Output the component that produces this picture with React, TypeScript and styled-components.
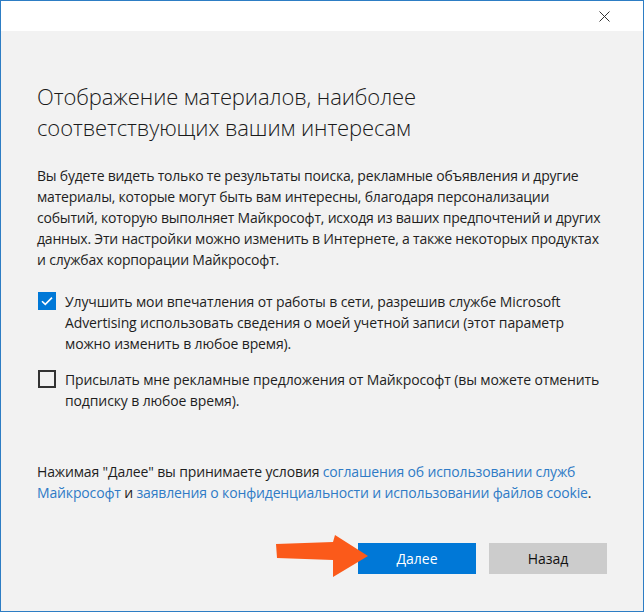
import React, { useState } from 'react';
import styled, { createGlobalStyle } from 'styled-components';

const GlobalStyle = createGlobalStyle`
  html, body { margin: 0; padding: 0; background: #f2f2f2; }
  * { box-sizing: border-box; }
`;

const Window = styled.div`
  position: relative;
  width: 644px; height: 612px;
  border: 1px solid #2d7dc4;
  background: #f2f2f2;
  display: flex; flex-direction: column;
  font-family: "Open Sans", "Noto Sans", sans-serif;
  color: #1e1e1e;
  overflow: hidden;
`;

const TitleBar = styled.div`
  height: 30px; background: #fff;
  display: flex; justify-content: flex-end; align-items: center;
`;

const CloseButton = styled.button`
  width: 46px; height: 30px; border: 0; background: transparent; padding: 0;
  display: flex; align-items: center; justify-content: center;
  margin-right: 16px;
`;

const Content = styled.div`
  flex: 1; display: flex; flex-direction: column;
  padding: 50px 36px 0 36px;
`;

const Heading = styled.h1`
  margin: 0; font-weight: 300; font-size: 22px; line-height: 31px; color: #1a1a1a;
  letter-spacing: -0.1px; white-space: nowrap;
`;

const Paragraph = styled.p<{ $gap: number; $spacing: number }>`
  margin: ${(p) => p.$gap}px 0 0 0;
  font-size: 14px; line-height: 21px; color: #1e1e1e;
  letter-spacing: ${(p) => p.$spacing}px; white-space: nowrap;
`;

const OptionRow = styled.label<{ $gap: number }>`
  margin-top: ${(p) => p.$gap}px;
  display: flex; align-items: flex-start; gap: 9px;
  font-size: 14px; line-height: 21px; cursor: pointer;
  letter-spacing: -0.12px; white-space: nowrap;
`;

const Box = styled.span<{ $checked: boolean }>`
  flex: none; width: 18px; height: 18px; margin-top: 1px; margin-left: 1px;
  display: flex; align-items: center; justify-content: center;
  background: ${(p) => (p.$checked ? '#0078d7' : 'transparent')};
  border: ${(p) => (p.$checked ? 'none' : '2px solid #333')};
`;

const Link = styled.a`
  color: #2f7bc6; text-decoration: none;
`;

const Buttons = styled.div`
  margin-top: 40px; display: flex; justify-content: flex-end; gap: 13px;
  position: relative;
`;

const Button = styled.button<{ $primary?: boolean }>`
  width: 118px; height: 31px; border: 0; padding: 0;
  font-family: inherit; font-size: 14px;
  background: ${(p) => (p.$primary ? '#0078d7' : '#cccccc')};
  color: ${(p) => (p.$primary ? '#fff' : '#111')};
`;

const Arrow = styled.svg`
  position: absolute; left: 239px; top: -8px; pointer-events: none;
`;

function Check({ checked, onToggle, children, gap }: { checked: boolean; onToggle: () => void; children: React.ReactNode; gap: number }) {
  return (
    <OptionRow $gap={gap} onClick={onToggle}>
      <Box $checked={checked}>
        {checked && (
          <svg width="12" height="10" viewBox="0 0 12 10">
            <path d="M1 5.2 L4.3 8.4 L11 1.6" fill="none" stroke="#fff" strokeWidth="1.6" />
          </svg>
        )}
      </Box>
      <span>{children}</span>
    </OptionRow>
  );
}

export default function App() {
  const [first, setFirst] = useState(true);
  const [second, setSecond] = useState(false);

  return (
    <>
      <GlobalStyle />
      <Window>
        <TitleBar>
          <CloseButton aria-label="Закрыть">
            <svg width="11" height="11" viewBox="0 0 11 11">
              <path d="M0.5 0.5 L10.5 10.5 M10.5 0.5 L0.5 10.5" stroke="#333" strokeWidth="1" />
            </svg>
          </CloseButton>
        </TitleBar>
        <Content>
          <Heading>
            Отображение материалов, наиболее<br />соответствующих вашим интересам
          </Heading>
          <Paragraph $gap={22} $spacing={-0.2}>
            Вы будете видеть только те результаты поиска, рекламные объявления и другие<br />
            материалы, которые могут быть вам интересны, благодаря персонализации<br />
            событий, которую выполняет Майкрософт, исходя из ваших предпочтений и других<br />
            данных. Эти настройки можно изменить в Интернете, а также некоторых продуктах<br />
            и службах корпорации Майкрософт.
          </Paragraph>
          <Check gap={21} checked={first} onToggle={() => setFirst(!first)}>
            Улучшить мои впечатления от работы в сети, разрешив службе Microsoft<br />
            Advertising использовать сведения о моей учетной записи (этот параметр<br />
            можно изменить в любое время).
          </Check>
          <Check gap={15} checked={second} onToggle={() => setSecond(!second)}>
            Присылать мне рекламные предложения от Майкрософт (вы можете отменить<br />
            подписку в любое время).
          </Check>
          <Paragraph $gap={50} $spacing={-0.15}>
            Нажимая "Далее" вы принимаете условия <Link href="#">соглашения об использовании служб<br />
            Майкрософт</Link> и <Link href="#">заявления о конфиденциальности и использовании файлов cookie</Link>.
          </Paragraph>
          <Buttons>
            <Button $primary>Далее</Button>
            <Button>Назад</Button>
            <Arrow width="96" height="44" viewBox="0 0 96 44">
              <path d="M0 9 L57 7 L59 0 L92 21 L57 42 L57 25 L1 23 Z" fill="#fb5a1a" />
            </Arrow>
          </Buttons>
        </Content>
      </Window>
    </>
  );
}
